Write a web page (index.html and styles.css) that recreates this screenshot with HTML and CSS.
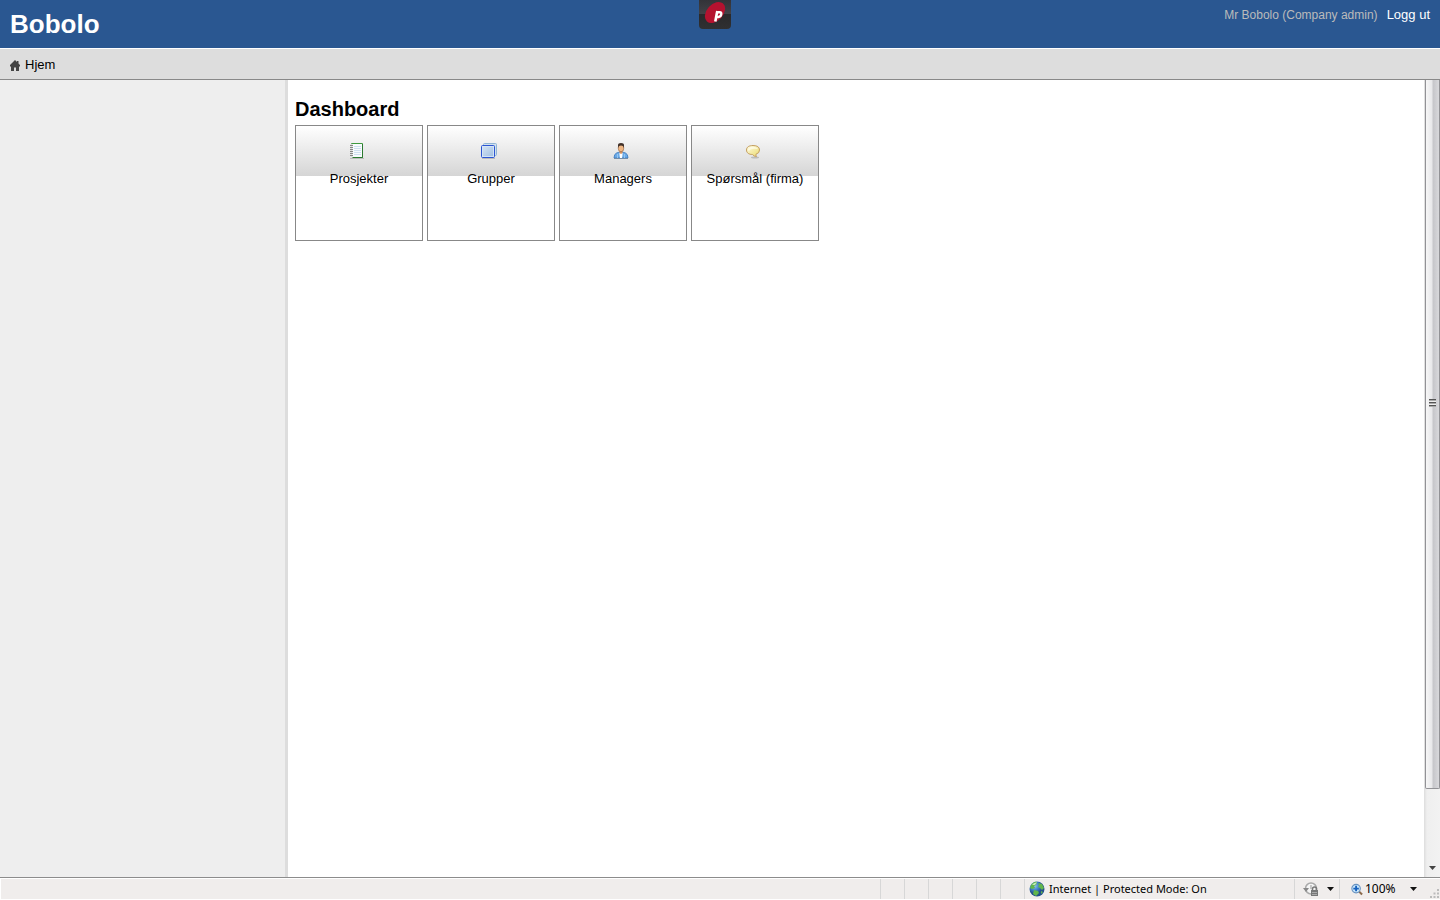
FILE: index.html
```html
<!DOCTYPE html>
<html lang="no">
<head>
<meta charset="utf-8">
<title>Bobolo</title>
<link rel="stylesheet" href="styles.css">
</head>
<body>
<header class="header">
  <div class="brand">Bobolo</div>
  <svg class="logo" viewBox="0 0 32 29" width="32" height="29" role="img" aria-label="Logo">
    <defs><linearGradient id="lg" x2="0" y2="1"><stop offset="0" stop-color="#333338"/><stop offset=".47" stop-color="#414146"/><stop offset=".5" stop-color="#29292b"/><stop offset="1" stop-color="#303032"/></linearGradient></defs>
    <path d="M0 0h32v25q0 4-4 4H4q-4 0-4-4z" fill="url(#lg)"/>
    <ellipse cx="16" cy="12.500" rx="12" ry="8.200" transform="rotate(-48 16 12.500)" fill="#b5122f"/>
    <path d="M18.500 12.200h2.200q2 0 1.500 2.300t-2.800 2.500h-1.600" fill="none" stroke="#fff" stroke-width="2.400"/>
    <path d="M18.300 11l-2 10.500" stroke="#fff" stroke-width="2.600"/>
  </svg>
  <div class="user"><span>Mr Bobolo (Company admin)</span><a href="#">Logg ut</a></div>
</header>
<nav class="crumbs">
  <a href="#"><svg width="10" height="11" viewBox="0 0 10 11" aria-hidden="true"><path d="M5 0L0 5V6.500h1V11h3V7.500h2V11h3V6.500h1V5L8.500 3.500V1H7v1z" fill="#444"/></svg>Hjem</a>
</nav>
<div class="workspace">
  <aside class="sidebar"></aside>
  <main class="main">
    <h1>Dashboard</h1>
    <div class="cards">
      <a class="card" href="#">
        <svg width="16" height="16" viewBox="0 0 16 16" aria-hidden="true"><path d="M1 15.500h14" stroke="#bbb"/><path d="M2.500.500h11v14h-11z" fill="#f8fbfd" stroke="#3f9a3f"/><path d="M13.500 1v13.500H3" fill="none" stroke="#2b7a30"/><path d="M5 3.500h7M5 5.500h7M5 7.500h7M5 9.500h7M5 11.500h7" stroke="#cfdff0"/><path d="M2.500 1v14" stroke="#ddd" stroke-width="2"/><path d="M1 2.500h3M1 4.500h3M1 6.500h3M1 8.500h3M1 10.500h3M1 12.500h3" stroke="#888"/></svg>
        <span>Prosjekter</span>
      </a>
      <a class="card" href="#">
        <svg width="16" height="16" viewBox="0 0 16 16" aria-hidden="true"><defs><linearGradient id="bl" x2="1" y2="1"><stop stop-color="#d9e7f4"/><stop offset="1" stop-color="#9bbbe0"/></linearGradient></defs><path d="M1 15.500h13" stroke="#bbb"/><rect x="2.500" y=".500" width="13" height="12" rx="1" fill="#d2e1ed" stroke="#91b5d5"/><rect x=".500" y="2.500" width="13" height="12" rx="1" fill="url(#bl)" stroke="#2b55d2"/><rect x="1.500" y="3.500" width="11" height="10" fill="none" stroke="#d4e4f5"/></svg>
        <span>Grupper</span>
      </a>
      <a class="card" href="#">
        <svg width="16" height="16" viewBox="0 0 16 16" aria-hidden="true"><path d="M1 15.500h14" stroke="#999"/><path d="M1 15q0-4 2.500-5l3-1h3l3 1Q15 11 15 15z" fill="#6aa9e6" stroke="#3b78bd" stroke-width=".800"/><path d="M6.500 10h3v2l-.500 3H7l-.500-3z" fill="#fff"/><path d="M6.500 7h3v3L8 11l-1.500-1z" fill="#d7925e"/><ellipse cx="8" cy="5" rx="2.800" ry="3.800" fill="#efb784" stroke="#94613c" stroke-width=".600"/><path d="M5 5V2q0-2 3-2t3 2v3l-1-2-2-.500L6 3z" fill="#403028"/><path d="M4.500 11v4M11.500 11v4" stroke="#94c5f0"/></svg>
        <span>Managers</span>
      </a>
      <a class="card" href="#">
        <svg width="16" height="16" viewBox="0 0 16 16" aria-hidden="true"><defs><linearGradient id="yl" x2="1" y2="1"><stop stop-color="#fffbe5"/><stop offset="1" stop-color="#eadb6c"/></linearGradient></defs><ellipse cx="10" cy="14.500" rx="4" ry="1" fill="#bbb"/><path d="M8 2.500C4 2.500 1.500 4 1.500 7S4 11.500 7.500 11.500q1.500 2 4 2-1-1.500-.500-2.300 3.500-1 3.500-4.200 0-4.500-6.500-4.500z" fill="url(#yl)" stroke="#c5a063"/><path d="M4 8q2-3 9-2-1-2-5-2.300Q3 4 3 7z" fill="#fffdee" opacity=".700"/></svg>
        <span>Spørsmål (firma)</span>
      </a>
    </div>
  </main>
  <div class="scroll" aria-hidden="true">
    <div class="thumb"><i></i></div>
    <svg width="7" height="4" viewBox="0 0 7 4"><path d="M0 0h7L3.500 4z" fill="#444"/></svg>
  </div>
</div>
<footer class="status">
  <div class="pane message"></div>
  <div class="pane slot"></div><div class="pane slot"></div><div class="pane slot"></div><div class="pane slot"></div><div class="pane slot"></div><div class="pane slot"></div>
  <div class="pane zone">
    <svg width="16" height="16" viewBox="0 0 16 16" aria-hidden="true"><defs><radialGradient id="gl" cx=".35" cy=".3"><stop stop-color="#8fc4ee"/><stop offset=".6" stop-color="#3d7cc4"/><stop offset="1" stop-color="#23508c"/></radialGradient></defs><circle cx="8" cy="8" r="7.500" fill="url(#gl)"/><path d="M2 4q3-4 6-3L7 4 5 5l1 2-3 1-2-1zM9 2l4 1 2 4-2 2-2-2-2-1 1-2zM5 9l4 1 1 2-3 3-3-2zM12 10l2 1-2 2z" fill="#62b64b"/><path d="M3 4q2-3 5-2.500L6 4z" fill="#c4e9b7"/></svg>
    <span>Internet | Protected Mode: On</span>
  </div>
  <div class="pane lock">
    <svg width="16" height="15" viewBox="0 0 16 15" aria-hidden="true"><circle cx="8" cy="6.500" r="5.500" fill="#f4f4f4" stroke="#aaa" stroke-width="1.500"/><path d="M0 6h6L3 10z" fill="#888"/><path d="M8 3v4" stroke="#999"/><path d="M9.500 8V7q0-2 2-2t2 2v1" fill="none" stroke="#777" stroke-width="1.500"/><path d="M8 8h7v6H8z" fill="#777"/><path d="M9 10.500h5M9 12.500h5" stroke="#aaa"/></svg>
    <svg width="7" height="4" viewBox="0 0 7 4" aria-hidden="true"><path d="M0 0h7L3.500 4z" fill="#111"/></svg>
  </div>
  <div class="pane zoom">
    <svg width="12" height="13" viewBox="0 0 13 13" aria-hidden="true"><path d="M8 8l4 4" stroke="#8b6a4d" stroke-width="2.200"/><circle cx="5.500" cy="5.500" r="4.600" fill="#c9e7fb" stroke="#6a93c0" stroke-width="1.200"/><path d="M5.500 2.500v6M2.500 5.500h6" stroke="#1761bd" stroke-width="2"/></svg>
    <span>100%</span>
    <svg class="arrow" width="7" height="4" viewBox="0 0 7 4" aria-hidden="true"><path d="M0 0h7L3.500 4z" fill="#111"/></svg>
  </div>
  <svg class="grip" width="9" height="9" viewBox="0 0 9 9" aria-hidden="true"><path d="M7 0h2v2H7zM3.500 3.500h2v2h-2zM7 3.500h2v2H7zM0 7h2v2H0zM3.500 7h2v2h-2zM7 7h2v2H7z" fill="#bbb"/></svg>
</footer>
</body>
</html>
```
FILE: styles.css
```css
* { box-sizing: border-box; }
body {
  margin: 0;
  min-height: 100vh;
  display: flex;
  flex-direction: column;
  font: 13px/16px "Liberation Sans", Arial, sans-serif;
  color: #000;
  background: #fff;
}
a { color: inherit; text-decoration: none; }
svg { display: block; flex: none; }
.header {
  display: grid;
  grid-template-columns: 1fr auto 1fr;
  align-items: start;
  height: 49px;
  padding: 0 10px;
  background: #2a5791;
  border-bottom: 1px solid #fff;
}
.brand {
  color: #fff;
  font-size: 26px;
  font-weight: bold;
  line-height: 48px;
}
.logo { margin-right: 10px; }
.user {
  display: flex;
  justify-content: flex-end;
  gap: 9px;
  padding-top: 7px;
  font-size: 12px;
  color: #bbb;
}
.user a { color: #fff; font-size: 13px; }
.crumbs {
  height: 31px;
  padding: 8px 10px 6px;
  background: #ddd;
  border-bottom: 1px solid #888;
}
.crumbs a { display: flex; align-items: center; gap: 5px; width: fit-content; }
.workspace { flex: 1; display: flex; }
.sidebar {
  width: 20%;
  background: #eee;
  border-right: 3px solid #ddd;
}
.main { flex: 1; padding: 17px 7px; }
h1 { margin: 0 0 4px; font-size: 20px; line-height: 24px; }
.cards { display: flex; flex-wrap: wrap; gap: 4px; }
.card {
  display: flex;
  flex-direction: column;
  align-items: center;
  gap: 12px;
  width: 128px;
  height: 116px;
  padding: 17px 4px 4px;
  border: 1px solid #888;
  background: linear-gradient(#fff, #d5d5d5) 0 0 / 100% 50px no-repeat;
}
.card svg { margin-right: 4px; }
.scroll {
  display: flex;
  flex-direction: column;
  align-items: center;
  justify-content: space-between;
  width: 16px;
  background: linear-gradient(90deg, #ddd, #efefef 3px, #f2f2f2);
}
.scroll svg { margin-bottom: 7px; }
.thumb {
  display: flex;
  align-items: center;
  justify-content: center;
  width: 15px;
  height: 89%;
  padding-bottom: 62px;
  border: 1px solid #929296;
  border-top: 0;
  border-radius: 0 0 2px 2px;
  background: linear-gradient(90deg, #f7f7f7, #e8e8ea 45%, #c6c6ca 55%, #d9d9dc);
}
.thumb i {
  width: 7px;
  height: 8px;
  background: repeating-linear-gradient(#555 0 1px, #aaa 1px 2px, #eee 2px 3px);
}
.status {
  position: relative;
  display: flex;
  height: 23px;
  border-top: 1px solid #8c8c8c;
  border-bottom: 1px solid #fff;
  box-shadow: inset 1px 1px #fff;
  background: #f0edec;
  font: 12px/16px "Noto Sans", "Open Sans", sans-serif;
}
.pane {
  display: flex;
  align-items: center;
  margin-top: 1px;
  border-right: 1px solid #d7d7d7;
}
.message { flex: 1; }
.slot { width: 24px; }
.zone { width: 270px; gap: 4px; padding-left: 4px; font-size: 11px; }
.lock { width: 45px; gap: 8px; padding-left: 8px; }
.zoom { width: 100px; gap: 2px; padding-left: 11px; border: 0; }
.arrow { margin-left: 12px; }
.grip { position: absolute; right: 1px; bottom: 1px; }
```
